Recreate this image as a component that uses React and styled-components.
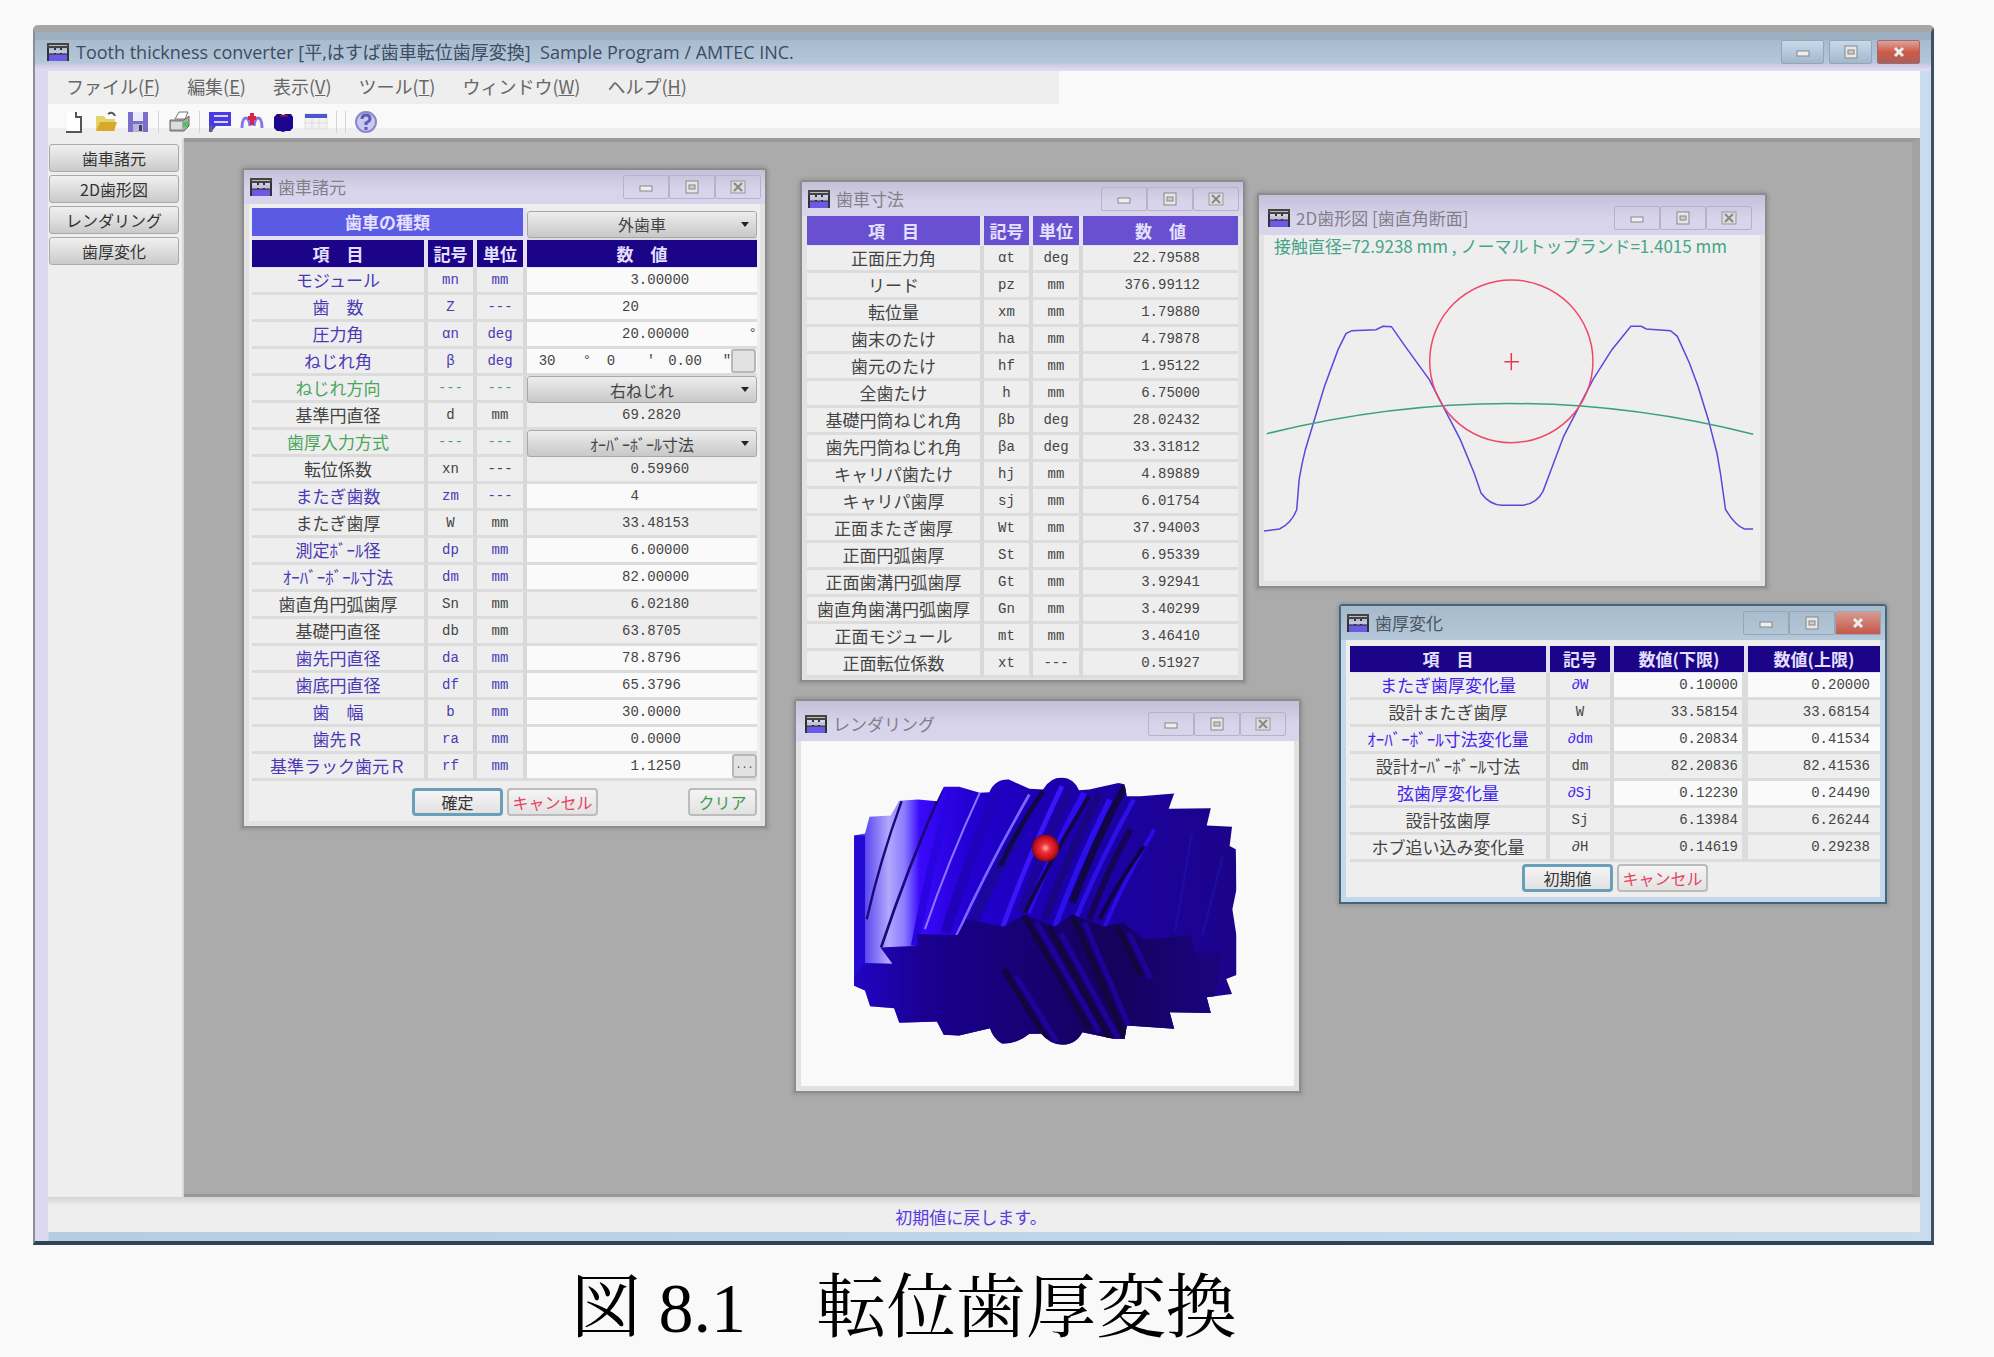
import React from "react";
import styled, { createGlobalStyle } from "styled-components";

const GlobalStyle = createGlobalStyle`
  * {
    box-sizing: border-box;
  }
  body {
    margin: 0;
    background: #f9f9f9;
    color: #333;
    font-family: "Noto Sans CJK JP", sans-serif;
    font-size: 17px;
    line-height: 24px;
  }
  button, input, select {
    font: inherit;
    color: inherit;
    margin: 0;
  }
`;

const mono = `"Liberation Mono", "Noto Sans CJK JP", monospace`;

const Page = styled.div`
  min-height: 100vh;
  display: flex;
  flex-direction: column;
  padding: 25px 60px 0 33px;
`;

const Frame = styled.div`
  flex: 1;
  display: flex;
  flex-direction: column;
  border-top: 7px solid #a6a6a4;
  border-left: 2px solid #8d8d92;
  border-right: 3px solid #3c5066;
  border-bottom: 4px solid #2e4258;
  border-radius: 5px 5px 0 0;
`;

const FrameTitle = styled.header`
  display: flex;
  align-items: center;
  height: 39px;
  padding: 0 11px 0 11px;
  gap: 6px;
  background: linear-gradient(#9cb0c2 0, #9cb0c2 8px, #a8bace 8px, #b4c8da 31px, #cdc8e2 32px, #e2def8 39px);
  color: #3d4c63;
`;

const FrameTitleText = styled.h1`
  flex: 1;
  margin: 0;
  font-size: 18px;
  font-weight: 400;
  font-family: "Open Sans", "Noto Sans CJK JP", sans-serif;
  white-space: pre;
`;

const FrameButtons = styled.div`
  display: flex;
  gap: 5px;
`;

const FrameButton = styled.button`
  width: 43px;
  height: 24px;
  padding: 0;
  display: flex;
  align-items: center;
  justify-content: center;
  border: 1px solid ${({ $close }) => ($close ? "#a06a70" : "#93a6ba")};
  border-radius: 2px;
  background: ${({ $close }) =>
    $close ? "linear-gradient(#dba49c, #cf5a48 50%, #a8605c)" : "linear-gradient(#c6daec, #a4b8cc)"};
`;

const FrameBody = styled.div`
  flex: 1;
  display: flex;
  flex-direction: column;
  padding: 0 11px 9px 13px;
  background: linear-gradient(90deg, #dcd8f0 0, #dcd8f0 13px, #b8cce0 14px, #c8dcee 100%);
`;

const MenuBar = styled.nav`
  display: flex;
  align-items: center;
  gap: 27px;
  height: 33px;
  padding: 0 0 3px 18px;
  font-size: 18px;
  background: linear-gradient(90deg, #eee 0, #eee 54%, #f9f9f9 54%);
`;

const MenuLink = styled.a`
  color: #666;
  text-decoration: none;
`;

const ToolBar = styled.div`
  display: flex;
  align-items: center;
  height: 34px;
  padding: 2px 0 0 14px;
  gap: 8px;
  background: linear-gradient(#f9f9f9 0, #f9f9f9 24px, #eee 24px);
`;

const ToolButton = styled.button`
  width: 24px;
  height: 24px;
  padding: 0;
  border: 0;
  background: none;
  svg {
    display: block;
  }
`;

const ToolSeparator = styled.span`
  width: 1px;
  height: 22px;
  background: #d4d4d4;
`;

const Workspace = styled.div`
  flex: 1;
  display: flex;
`;

const SideBar = styled.aside`
  flex: 0 0 136px;
  display: flex;
  flex-direction: column;
  gap: 3px;
  padding: 6px 3px 0 1px;
  background: #eee;
  border-right: 2px solid #d8d8d8;
`;

const SideButton = styled.button`
  height: 28px;
  padding: 0;
  border: 1px solid #aaa;
  border-radius: 3px;
  background: linear-gradient(#f0f0f0, #dedede 50%, #cacaca);
  font-size: 16px;
  line-height: 24px;
`;

const Desktop = styled.main`
  flex: 1;
  position: relative;
  min-height: 1050px;
  background: #ababab;
  border-top: 4px solid #999;
  border-right: 8px solid #a2a2a2;
  border-bottom: 3px solid #999;
`;

const StatusBar = styled.footer`
  height: 35px;
  display: flex;
  align-items: center;
  justify-content: center;
  padding: 4px 26px 0 0;
  background: linear-gradient(#d4d4d4, #eee 9px);
  color: #5a3ce0;
`;

/* child windows float freely on the desktop */
const ChildWindow = styled.section`
  position: absolute;
  left: ${({ $x }) => $x}px;
  top: ${({ $y }) => $y}px;
  width: ${({ $w }) => $w}px;
  border: 2px solid ${({ $active }) => ($active ? "#45657a" : "#8c8c8c")};
  border-radius: 4px 4px 0 0;
  background: ${({ $active }) => ($active ? "#c4d8ea" : "#e2e2e2")};
  box-shadow: 0 0 3px 2px #999;
`;

const ChildTitle = styled.header`
  display: flex;
  align-items: center;
  gap: 5px;
  height: ${({ $tall }) => ($tall ? 40 : 34)}px;
  padding: ${({ $tall }) => ($tall ? "6px 13px 0 8px" : "0 4px 0 5px")};
  color: ${({ $active }) => ($active ? "#4a5560" : "#808088")};
  background: ${({ $active }) =>
    $active ? "linear-gradient(#a6bacc, #b4c8da)" : "linear-gradient(#c4c0d8, #d8d4ec 60%)"};
`;

const ChildTitleText = styled.h2`
  flex: 1;
  margin: 0;
  font-size: 17px;
  font-weight: 400;
`;

const ChildButtons = styled.div`
  display: flex;
`;

const ChildButton = styled.button`
  width: 46px;
  height: 24px;
  padding: 0;
  display: flex;
  align-items: center;
  justify-content: center;
  border: 1px solid ${({ $active }) => ($active ? "#93a6ba" : "#b6b2ca")};
  border-radius: 2px;
  background: ${({ $close }) => ($close ? "linear-gradient(#d89a90, #c4584a)" : "transparent")};
`;

const ChildBody = styled.div`
  margin: 0 5px ${({ $foot = 5 }) => $foot}px;
  padding: ${({ $pad }) => $pad || "0"};
  background: ${({ $white }) => ($white ? "#f9f9f9" : "#eee")};
`;

const Grid = styled.table`
  width: 100%;
  table-layout: fixed;
  border-collapse: separate;
  border-spacing: 0;
`;

const Col = styled.col`
  width: ${({ $w }) => ($w ? `${$w}px` : "auto")};
`;

const Head = styled.th`
  height: ${({ $h }) => $h || 28}px;
  padding: 0;
  font-weight: 700;
  line-height: 22px;
  color: #e4e0ff;
  background: ${({ $tone }) => $tone || "#1c0488"};
  border-right: 4px solid #e4e2f2;
  border-bottom: ${({ $gap }) => $gap || 1}px solid #e4e2f2;
  white-space: pre;
  &:last-child {
    border-right: 0;
  }
`;

const tones = {
  blue: "#4a38b4",
  bright: "#4322f0",
  green: "#4aa65c",
  black: "#444",
};

const Cell = styled.td`
  height: 27px;
  padding: 0;
  text-align: center;
  line-height: 24px;
  white-space: pre;
  color: ${({ $tone }) => tones[$tone] || tones.black};
  border-right: 4px solid #d8d8d8;
  border-bottom: 3px solid #dcdcdc;
  ${({ $mono }) => $mono && `font-family: ${mono}; font-size: 14px;`}
`;

const ValueCell = styled.td`
  height: 27px;
  padding: 0 ${({ $right }) => $right || 0}px 0 ${({ $left }) => $left || 0}px;
  text-align: ${({ $left }) => ($left ? "left" : "right")};
  font-family: ${mono};
  font-size: 14px;
  line-height: 24px;
  white-space: pre;
  color: #444;
  background: ${({ $edit }) => ($edit ? "#fafafa" : "#eee")};
  border-bottom: 3px solid #dcdcdc;
  border-right: ${({ $rule }) => ($rule ? "6px solid #dcdcdc" : "0")};
`;

const ValueLine = styled.div`
  display: flex;
  align-items: center;
`;

const ValueInput = styled.input`
  display: block;
  flex: ${({ $w }) => ($w ? "none" : "1")};
  width: ${({ $w }) => ($w ? `${$w}px` : "100%")};
  min-width: 0;
  height: 24px;
  padding: 0 0 0 ${({ $left }) => $left || 0}px;
  border: 0;
  background: transparent;
  text-align: ${({ $align }) => $align || "left"};
`;

const Mark = styled.span`
  width: ${({ $w }) => $w}px;
  padding-left: 4px;
`;

const DotButton = styled.button`
  width: 25px;
  height: 24px;
  padding: 0;
  border: 2px solid #b8b8b8;
  border-radius: 3px;
  background: #e2e2e2;
  font-size: 10px;
  line-height: 16px;
`;

const SelectBox = styled.div`
  position: relative;
  margin-bottom: -3px;
  &::after {
    content: "";
    position: absolute;
    right: 8px;
    top: 11px;
    border: 4px solid transparent;
    border-top: 5px solid #222;
    pointer-events: none;
  }
`;

const Select = styled.select`
  display: block;
  width: 100%;
  height: 27px;
  padding: 0;
  appearance: none;
  border: 1px solid #a8a8a8;
  border-radius: 3px;
  background: linear-gradient(#eee, #dadada 50%, #c8c8c8);
  text-align: center;
  text-align-last: center;
  font-family: "Noto Sans CJK JP", sans-serif;
  font-size: 16px;
`;

const Actions = styled.div`
  display: flex;
  gap: 4px;
  padding: ${({ $pad }) => $pad};
`;

const ActionButton = styled.button`
  width: ${({ $w }) => $w || 91}px;
  height: 28px;
  padding: 0;
  border: ${({ $default }) => ($default ? "3px solid #6a9fba" : "2px solid #bcbcbc")};
  border-radius: 4px;
  background: linear-gradient(#f4f4f4, #e2e2e2);
  color: ${({ $color }) => $color || "#333"};
  font-size: 16px;
  line-height: 20px;
  ${({ $end }) => $end && "margin-left: auto;"}
`;

const PlotNote = styled.p`
  margin: 0;
  padding: 0 10px;
  height: 22px;
  line-height: 22px;
  color: #45a588;
  white-space: pre;
`;

const Drawing = styled.svg`
  display: block;
  width: 100%;
  height: ${({ $h }) => $h}px;
`;

const Caption = styled.p`
  margin: 0;
  height: 112px;
  padding: 22px 0 0 538px;
  font-family: "Liberation Serif", "Noto Serif CJK JP", "Noto Sans CJK JP", serif;
  font-size: 70px;
  font-weight: 400;
  line-height: 84px;
  color: #000;
  white-space: pre;
`;

const WindowIcon = () => (
  <svg width="24" height="20" viewBox="0 0 24 20" aria-hidden="true">
    <rect x="1" y="1" width="22" height="5" fill="#444" />
    <rect x="3" y="3" width="18" height="1" fill="#bbb" />
    <path d="M2 6v13M22 6v13M9 6v6M15 6v6" stroke="#333" strokeWidth="2" />
    <rect x="3" y="8" width="18" height="3" fill="#c4c4d8" />
    <rect x="3" y="12" width="18" height="7" fill="#6a5ae4" />
    <path d="M3 12h18" stroke="#222" />
  </svg>
);

const MinIcon = () => (
  <svg width="18" height="12" viewBox="0 0 18 12" aria-hidden="true">
    <rect x="3" y="5" width="12" height="5" fill="#eee" stroke="#888" />
  </svg>
);

const MaxIcon = () => (
  <svg width="18" height="14" viewBox="0 0 18 14" aria-hidden="true">
    <rect x="3" y="1" width="12" height="12" fill="#e6e6e6" stroke="#888" />
    <rect x="6" y="5" width="6" height="4" fill="#ccc" stroke="#888" />
  </svg>
);

const CloseIcon = ({ solid }) => (
  <svg width="18" height="14" viewBox="0 0 18 14" aria-hidden="true">
    {!solid && <rect x="2" y="1" width="14" height="12" fill="#ddd" stroke="#999" />}
    <path d="M5 3l8 8M13 3l-8 8" stroke={solid ? "#eee" : "#888"} strokeWidth={solid ? 3 : 2} />
  </svg>
);

const toolIcons = {
  new: (
    <>
      <path d="M5 2h9l5 5v15H5z" fill="#fff" />
      <path d="M14 2v5h5v15H4" fill="none" stroke="#555" strokeWidth="2" />
    </>
  ),
  open: (
    <>
      <path d="M2 6h8l2 3h9v12H2z" fill="#e4d468" />
      <path d="M2 21l4-9h17l-3 9z" fill="#d8a82c" />
      <path d="M14 4q5-3 7 2" fill="none" stroke="#555" strokeWidth="2" />
    </>
  ),
  save: (
    <>
      <rect x="2" y="2" width="20" height="20" fill="#7a70cc" />
      <rect x="7" y="2" width="10" height="9" fill="#eceaff" />
      <rect x="7" y="14" width="10" height="8" fill="#b8b4e0" />
      <rect x="13" y="15" width="3" height="6" fill="#444" />
    </>
  ),
  print: (
    <>
      <path d="M8 9l4-7h9l-3 7z" fill="#fff" stroke="#777" />
      <path d="M3 10h14l5-4v10l-5 5H3z" fill="#aaa" stroke="#666" />
      <rect x="4" y="12" width="11" height="7" fill="#ddd" />
      <rect x="16" y="12" width="5" height="5" fill="#48c858" />
    </>
  ),
  table: (
    <>
      <path d="M1 2h22v14H8l-5 6H1z" fill="#4a3ce0" />
      <path d="M6 6h14M6 12h14" stroke="#d8d4ff" strokeWidth="2" />
      <path d="M3 16v6" stroke="#666" strokeWidth="3" />
    </>
  ),
  profile: (
    <>
      <path d="M2 18q0-10 4-10q3 0 4 8M14 16q1-8 4-8q4 0 4 10" fill="none" stroke="#8478e4" strokeWidth="3" />
      <path d="M12 3v12M8 8h8" stroke="#d82448" strokeWidth="4" />
    </>
  ),
  render: (
    <>
      <path d="M5 4h4l2 1 3-1h5l2 3v11l-3 3h-4l-3 1-3-1H5l-3-3V7z" fill="#1c0490" />
      <path d="M8 6h8" stroke="#801038" strokeWidth="2" />
    </>
  ),
  change: (
    <>
      <rect x="1" y="4" width="22" height="15" fill="#f2f2f2" stroke="#ddd" />
      <rect x="1" y="4" width="22" height="4" fill="#4a58d0" />
      <path d="M8 8v11M15 8v11M1 13h22" stroke="#ddd" />
    </>
  ),
  help: (
    <>
      <circle cx="12" cy="12" r="10" fill="#c8c8f0" stroke="#8a88c8" strokeWidth="2" />
      <path d="M8 9q0-4 4-4t4 4q0 2-4 4v2M12 17v3" fill="none" stroke="#5c5cb4" strokeWidth="3" />
    </>
  ),
};

const Tool = ({ name, label }) => (
  <ToolButton aria-label={label}>
    <svg width="24" height="24" viewBox="0 0 24 24">
      {toolIcons[name]}
    </svg>
  </ToolButton>
);

const MdiWindow = ({ title, x, y, w, active, tall, children }) => (
  <ChildWindow $x={x} $y={y} $w={w} $active={active}>
    <ChildTitle $active={active} $tall={tall}>
      <WindowIcon />
      <ChildTitleText>{title}</ChildTitleText>
      <ChildButtons>
        <ChildButton $active={active} aria-label="最小化"><MinIcon /></ChildButton>
        <ChildButton $active={active} aria-label="最大化"><MaxIcon /></ChildButton>
        <ChildButton $active={active} $close={active} aria-label="閉じる"><CloseIcon solid={active} /></ChildButton>
      </ChildButtons>
    </ChildTitle>
    {children}
  </ChildWindow>
);

const menus = ["ファイル(F)", "編集(E)", "表示(V)", "ツール(T)", "ウィンドウ(W)", "ヘルプ(H)"];
const sideItems = ["歯車諸元", "2D歯形図", "レンダリング", "歯厚変化"];

// label, symbol, unit, value, tone, kind
const specRows = [
  ["モジュール", "mn", "mm", "3.00000", "blue", "edit"],
  ["歯　数", "Z", "---", "20", "blue", "edit"],
  ["圧力角", "αn", "deg", "20.00000", "blue", "degree"],
  ["ねじれ角", "β", "deg", "", "blue", "dms"],
  ["ねじれ方向", "---", "---", "右ねじれ", "green", "select"],
  ["基準円直径", "d", "mm", "69.2820", "black"],
  ["歯厚入力方式", "---", "---", "ｵｰﾊﾞｰﾎﾞｰﾙ寸法", "green", "select"],
  ["転位係数", "xn", "---", "0.59960", "black"],
  ["またぎ歯数", "zm", "---", "4", "blue", "edit"],
  ["またぎ歯厚", "W", "mm", "33.48153", "black"],
  ["測定ﾎﾞｰﾙ径", "dp", "mm", "6.00000", "blue", "edit"],
  ["ｵｰﾊﾞｰﾎﾞｰﾙ寸法", "dm", "mm", "82.00000", "blue", "edit"],
  ["歯直角円弧歯厚", "Sn", "mm", "6.02180", "black"],
  ["基礎円直径", "db", "mm", "63.8705", "black"],
  ["歯先円直径", "da", "mm", "78.8796", "blue", "edit"],
  ["歯底円直径", "df", "mm", "65.3796", "blue", "edit"],
  ["歯　幅", "b", "mm", "30.0000", "blue", "edit"],
  ["歯先Ｒ", "ra", "mm", "0.0000", "blue", "edit"],
  ["基準ラック歯元Ｒ", "rf", "mm", "1.1250", "blue", "more"],
];

const sizeRows = [
  ["正面圧力角", "αt", "deg", "22.79588"],
  ["リード", "pz", "mm", "376.99112"],
  ["転位量", "xm", "mm", "1.79880"],
  ["歯末のたけ", "ha", "mm", "4.79878"],
  ["歯元のたけ", "hf", "mm", "1.95122"],
  ["全歯たけ", "h", "mm", "6.75000"],
  ["基礎円筒ねじれ角", "βb", "deg", "28.02432"],
  ["歯先円筒ねじれ角", "βa", "deg", "33.31812"],
  ["キャリパ歯たけ", "hj", "mm", "4.89889"],
  ["キャリパ歯厚", "sj", "mm", "6.01754"],
  ["正面またぎ歯厚", "Wt", "mm", "37.94003"],
  ["正面円弧歯厚", "St", "mm", "6.95339"],
  ["正面歯溝円弧歯厚", "Gt", "mm", "3.92941"],
  ["歯直角歯溝円弧歯厚", "Gn", "mm", "3.40299"],
  ["正面モジュール", "mt", "mm", "3.46410"],
  ["正面転位係数", "xt", "---", "0.51927"],
];

const changeRows = [
  ["またぎ歯厚変化量", "∂W", "0.10000", "0.20000", true],
  ["設計またぎ歯厚", "W", "33.58154", "33.68154", false],
  ["ｵｰﾊﾞｰﾎﾞｰﾙ寸法変化量", "∂dm", "0.20834", "0.41534", true],
  ["設計ｵｰﾊﾞｰﾎﾞｰﾙ寸法", "dm", "82.20836", "82.41536", false],
  ["弦歯厚変化量", "∂Sj", "0.12230", "0.24490", true],
  ["設計弦歯厚", "Sj", "6.13984", "6.26244", false],
  ["ホブ追い込み変化量", "∂H", "0.14619", "0.29238", false],
];

// line the numbers up on the decimal point
const alignPoint = (v) => {
  const [whole, frac] = v.split(".");
  return whole.padStart(2, " ") + (frac ? `.${frac}` : "");
};

const SpecValue = ({ id, label, value, kind }) => {
  if (kind === "select") {
    return (
      <ValueCell $edit={false}>
        <SelectBox>
          <Select id={id} defaultValue={value}>
            <option>{value}</option>
          </Select>
        </SelectBox>
      </ValueCell>
    );
  }
  if (kind === "dms") {
    return (
      <ValueCell $edit>
        <ValueLine>
          <ValueInput id={id} $w={40} $align="center" defaultValue="30" />
          <Mark $w={24}>°</Mark>
          <ValueInput aria-label="ねじれ角 分" $w={40} $align="center" defaultValue="0" />
          <Mark $w={24}>'</Mark>
          <ValueInput aria-label="ねじれ角 秒" $w={60} $align="center" defaultValue="0.00" />
          <Mark $w={16}>"</Mark>
          <DotButton aria-label="ねじれ角の設定" />
        </ValueLine>
      </ValueCell>
    );
  }
  if (!kind) {
    return <ValueCell $left={95}>{alignPoint(value)}</ValueCell>;
  }
  return (
    <ValueCell $edit>
      <ValueLine>
        <ValueInput id={id} $left={95} defaultValue={alignPoint(value)} />
        {kind === "degree" && <Mark $w={16}>°</Mark>}
        {kind === "more" && <DotButton aria-label={`${label}の設定`}>...</DotButton>}
      </ValueLine>
    </ValueCell>
  );
};

const SpecWindow = () => (
  <MdiWindow title="歯車諸元" x={58} y={26} w={525}>
    <ChildBody $pad="4px 3px 0">
      <Grid>
        <colgroup>
          <Col $w={176} />
          <Col $w={49} />
          <Col $w={50} />
          <Col />
        </colgroup>
        <thead>
          <tr>
            <Head colSpan={3} $tone="#5a5ae4" $h={32} $gap={4}>
              <label htmlFor="gear-type">歯車の種類</label>
            </Head>
            <ValueCell>
              <SelectBox>
                <Select id="gear-type" defaultValue="外歯車">
                  <option>外歯車</option>
                </Select>
              </SelectBox>
            </ValueCell>
          </tr>
          <tr>
            <Head>項　目</Head>
            <Head>記号</Head>
            <Head>単位</Head>
            <Head>数　値</Head>
          </tr>
        </thead>
        <tbody>
          {specRows.map(([label, symbol, unit, value, tone, kind], i) => (
            <tr key={label}>
              <Cell $tone={tone}>
                {kind ? <label htmlFor={`spec-${i}`}>{label}</label> : label}
              </Cell>
              <Cell $tone={tone} $mono>{symbol}</Cell>
              <Cell $tone={tone} $mono>{unit}</Cell>
              <SpecValue id={`spec-${i}`} label={label} value={value} kind={kind} />
            </tr>
          ))}
        </tbody>
      </Grid>
      <Actions $pad="7px 0 5px 160px">
        <ActionButton $default>確定</ActionButton>
        <ActionButton $color="#e8415c">キャンセル</ActionButton>
        <ActionButton $color="#3f9a4c" $w={69} $end>クリア</ActionButton>
      </Actions>
    </ChildBody>
  </MdiWindow>
);

const SizeWindow = () => (
  <MdiWindow title="歯車寸法" x={616} y={38} w={445}>
    <ChildBody $foot={2}>
      <Grid>
        <colgroup>
          <Col $w={177} />
          <Col $w={49} />
          <Col $w={50} />
          <Col />
        </colgroup>
        <thead>
          <tr>
            {["項　目", "記号", "単位", "数　値"].map((h) => (
              <Head key={h} $tone="#6850d0" $h={30}>{h}</Head>
            ))}
          </tr>
        </thead>
        <tbody>
          {sizeRows.map(([label, symbol, unit, value]) => (
            <tr key={label}>
              <Cell>{label}</Cell>
              <Cell $mono>{symbol}</Cell>
              <Cell $mono>{unit}</Cell>
              <ValueCell $right={38}>{value}</ValueCell>
            </tr>
          ))}
        </tbody>
      </Grid>
    </ChildBody>
  </MdiWindow>
);

const ProfileWindow = () => (
  <MdiWindow title="2D歯形図 [歯直角断面]" x={1073} y={51} w={510} tall>
    <ChildBody>
      <PlotNote>接触直径=72.9238 mm , ノーマルトップランド=1.4015 mm</PlotNote>
      <Drawing $h={324} viewBox="70 232 1440 972" preserveAspectRatio="none" role="img" aria-label="2D歯形図">
        <g fill="none" strokeWidth="1.5">
          <path
            d="M70 1054L115 1048Q150 1030 165 990L172 900Q180 850 190 810L215 725L245 622L285 510L308 462L325 453L395 450L415 440L440 441L480 500L550 600L590 680L640 780L680 880L700 940Q725 975 760 977H815Q860 975 880 935L900 880L940 770L985 680L1025 600L1080 510L1135 440H1165L1180 448L1250 453L1270 470L1305 550L1330 620L1360 720L1385 820L1395 880L1410 990Q1440 1040 1465 1048H1490"
            stroke="#5a48dc"
            vectorEffect="non-scaling-stroke"
          />
          <path d="M78 762Q790 580 1490 764" stroke="#3aa080" vectorEffect="non-scaling-stroke" />
          <ellipse cx="788" cy="545" rx="237" ry="244" stroke="#f0486c" vectorEffect="non-scaling-stroke" />
          <path d="M788 520v52M768 546h42" stroke="#e83850" vectorEffect="non-scaling-stroke" />
        </g>
      </Drawing>
    </ChildBody>
  </MdiWindow>
);

// tooth flanks seen on the upper half: [x top, y top, x bottom, y bottom, colour, width]
const flanks = [
  [352, 335, 250, 690, "#1c0878", 7],
  [470, 300, 292, 775, "#1c0878", 8],
  [500, 300, 390, 770, "#2804e0", 22],
  [580, 310, 420, 720, "#8878ff", 6],
  [640, 290, 480, 730, "#2002bc", 30],
  [725, 315, 512, 740, "#7868ff", 8],
  [700, 420, 560, 700, "#1c06a0", 34],
  [765, 305, 640, 530, "#120848", 14],
  [820, 290, 645, 720, "#3818f8", 14],
  [845, 300, 700, 670, "#1c0496", 20],
  [885, 310, 720, 670, "#2c0cf0", 18],
  [900, 320, 712, 670, "#140648", 12],
  [930, 310, 770, 690, "#1a0484", 22],
  [960, 330, 800, 712, "#2c10ec", 16],
  [1003, 290, 850, 640, "#120644", 20],
  [1030, 330, 860, 690, "#2c10e8", 14],
  [1020, 420, 900, 690, "#150554", 18],
  [1090, 420, 945, 712, "#2a0ce0", 12],
  [1060, 470, 930, 690, "#120444", 12],
];

const grooves = [
  [650, 840, 775, 1050],
  [710, 680, 900, 1020],
  [780, 712, 960, 1050],
  [850, 680, 1010, 1060],
  [980, 712, 1050, 860],
];

const RenderWindow = () => (
  <MdiWindow title="レンダリング" x={610} y={557} w={507} tall>
    <ChildBody $white>
      <Drawing $h={345} viewBox="58 154 1440 1038" preserveAspectRatio="none" role="img" aria-label="レンダリング">
        <defs>
          <linearGradient id="body" x1="0" x2="1">
            <stop offset="0" stopColor="#2404d0" />
            <stop offset="0.04" stopColor="#5a48f0" />
            <stop offset="0.1" stopColor="#b4a8fc" />
            <stop offset="0.14" stopColor="#8c7cff" />
            <stop offset="0.18" stopColor="#3a08fc" />
            <stop offset="0.3" stopColor="#2400d4" />
            <stop offset="0.5" stopColor="#1c00b0" />
            <stop offset="1" stopColor="#1c0488" />
          </linearGradient>
          <linearGradient id="lower" x1="0" x2="1">
            <stop offset="0" stopColor="#2204c8" />
            <stop offset="0.2" stopColor="#1a0090" />
            <stop offset="0.7" stopColor="#14025c" />
            <stop offset="1" stopColor="#1a0480" />
          </linearGradient>
          <radialGradient id="ball">
            <stop offset="0" stopColor="#ffb0b0" />
            <stop offset="0.35" stopColor="#f03030" />
            <stop offset="0.8" stopColor="#c01020" />
            <stop offset="1" stopColor="#700818" />
          </radialGradient>
          <clipPath id="gear">
            <path d="M213 438L245 432L258 382L320 378L345 334L400 330L455 335L475 292L520 292L580 310L608 308Q625 268 665 270L725 298L765 300Q785 264 820 264Q855 266 870 302L900 300L985 280L1003 284L1010 320L1050 320L1148 312L1132 358L1255 356L1243 408L1317 412L1310 470L1328 480L1330 600L1318 660L1330 740V858L1300 870L1317 915L1243 925L1255 972L1135 970L1148 1020L1010 1010L1003 1050L970 1050L880 1030Q860 1068 820 1068Q785 1066 760 1035L725 1035Q690 1066 645 1064Q620 1050 610 1018L520 1040L475 1038L455 998L345 1002L330 958L260 952L245 905L213 890Z" />
          </clipPath>
        </defs>
        <g clipPath="url(#gear)">
          <rect x="200" y="250" width="1140" height="830" fill="url(#body)" />
          <path d="M213 438h32v460h-32z" fill="#2408d4" />
          {flanks.map(([x1, y1, x2, y2, color, width]) => (
            <path
              key={`${x1}-${y1}-${x2}`}
              d={`M${x1} ${y1}Q${(x1 + x2) / 2 - 12} ${(y1 + y2) / 2} ${x2} ${y2}`}
              fill="none"
              stroke={color}
              strokeWidth={width}
            />
          ))}
          <path
            d="M200 880L245 822L325 824L290 775L400 770L395 735L515 738L540 690L650 712L710 676L800 712L850 676L945 712L1000 700L1060 752L1195 738L1210 790L1290 790L1240 1080H200Z"
            fill="url(#lower)"
          />
          {grooves.map(([x1, y1, x2, y2]) => (
            <g key={x1} strokeWidth="16">
              <path d={`M${x1} ${y1}L${x2} ${y2}`} stroke="#12063c" />
              <path d={`M${x1 + 36} ${y1 + 20}L${x2 + 30} ${y2 + 10}`} stroke="#1c0496" />
            </g>
          ))}
          <path d="M1200 430L1150 730M1290 500L1230 740" stroke="#1c0ca0" strokeWidth="8" />
        </g>
        <ellipse cx="772" cy="476" rx="40" ry="41" fill="url(#ball)" />
      </Drawing>
    </ChildBody>
  </MdiWindow>
);

const ChangeWindow = () => (
  <MdiWindow title="歯厚変化" x={1155} y={462} w={548} active>
    <ChildBody $pad="6px 0 0 4px">
      <Grid>
        <colgroup>
          <Col $w={200} />
          <Col $w={64} />
          <Col $w={134} />
          <Col />
        </colgroup>
        <thead>
          <tr>
            {["項　目", "記号", "数値(下限)", "数値(上限)"].map((h) => (
              <Head key={h} $h={27}>{h}</Head>
            ))}
          </tr>
        </thead>
        <tbody>
          {changeRows.map(([label, symbol, low, high, edit], i) => (
            <tr key={label}>
              <Cell $tone={edit ? "bright" : "black"}>
                {edit ? <label htmlFor={`change-${i}`}>{label}</label> : label}
              </Cell>
              <Cell $tone={edit ? "bright" : "black"} $mono>{symbol}</Cell>
              {edit ? (
                <>
                  <ValueCell $edit $rule $right={4}>
                    <ValueInput id={`change-${i}`} $align="right" defaultValue={low} />
                  </ValueCell>
                  <ValueCell $edit $right={10}>
                    <ValueInput aria-label={`${label} 上限`} $align="right" defaultValue={high} />
                  </ValueCell>
                </>
              ) : (
                <>
                  <ValueCell $rule $right={4}>{low}</ValueCell>
                  <ValueCell $right={10}>{high}</ValueCell>
                </>
              )}
            </tr>
          ))}
        </tbody>
      </Grid>
      <Actions $pad="2px 0 5px 172px">
        <ActionButton $default>初期値</ActionButton>
        <ActionButton $color="#e8415c">キャンセル</ActionButton>
      </Actions>
    </ChildBody>
  </MdiWindow>
);

const App = () => (
  <>
    <GlobalStyle />
    <Page>
      <Frame>
        <FrameTitle>
          <WindowIcon />
          <FrameTitleText>
            {"Tooth thickness converter [平,はすば歯車転位歯厚変換]  Sample Program / AMTEC INC."}
          </FrameTitleText>
          <FrameButtons>
            <FrameButton aria-label="最小化"><MinIcon /></FrameButton>
            <FrameButton aria-label="最大化"><MaxIcon /></FrameButton>
            <FrameButton $close aria-label="閉じる"><CloseIcon solid /></FrameButton>
          </FrameButtons>
        </FrameTitle>
        <FrameBody>
          <MenuBar>
            {menus.map((m) => (
              <MenuLink key={m} href="#">
                {m.slice(0, -2)}<u>{m.slice(-2, -1)}</u>)
              </MenuLink>
            ))}
          </MenuBar>
          <ToolBar>
            <Tool name="new" label="新規" />
            <Tool name="open" label="開く" />
            <Tool name="save" label="保存" />
            <ToolSeparator />
            <Tool name="print" label="印刷" />
            <ToolSeparator />
            <Tool name="table" label="歯車諸元" />
            <Tool name="profile" label="2D歯形図" />
            <Tool name="render" label="レンダリング" />
            <Tool name="change" label="歯厚変化" />
            <ToolSeparator />
            <ToolSeparator />
            <Tool name="help" label="ヘルプ" />
          </ToolBar>
          <Workspace>
            <SideBar>
              {sideItems.map((s) => (
                <SideButton key={s}>{s}</SideButton>
              ))}
            </SideBar>
            <Desktop>
              <SpecWindow />
              <SizeWindow />
              <ProfileWindow />
              <RenderWindow />
              <ChangeWindow />
            </Desktop>
          </Workspace>
          <StatusBar>初期値に戻します。</StatusBar>
        </FrameBody>
      </Frame>
      <Caption>図 8.1　転位歯厚変換</Caption>
    </Page>
  </>
);

export default App;
